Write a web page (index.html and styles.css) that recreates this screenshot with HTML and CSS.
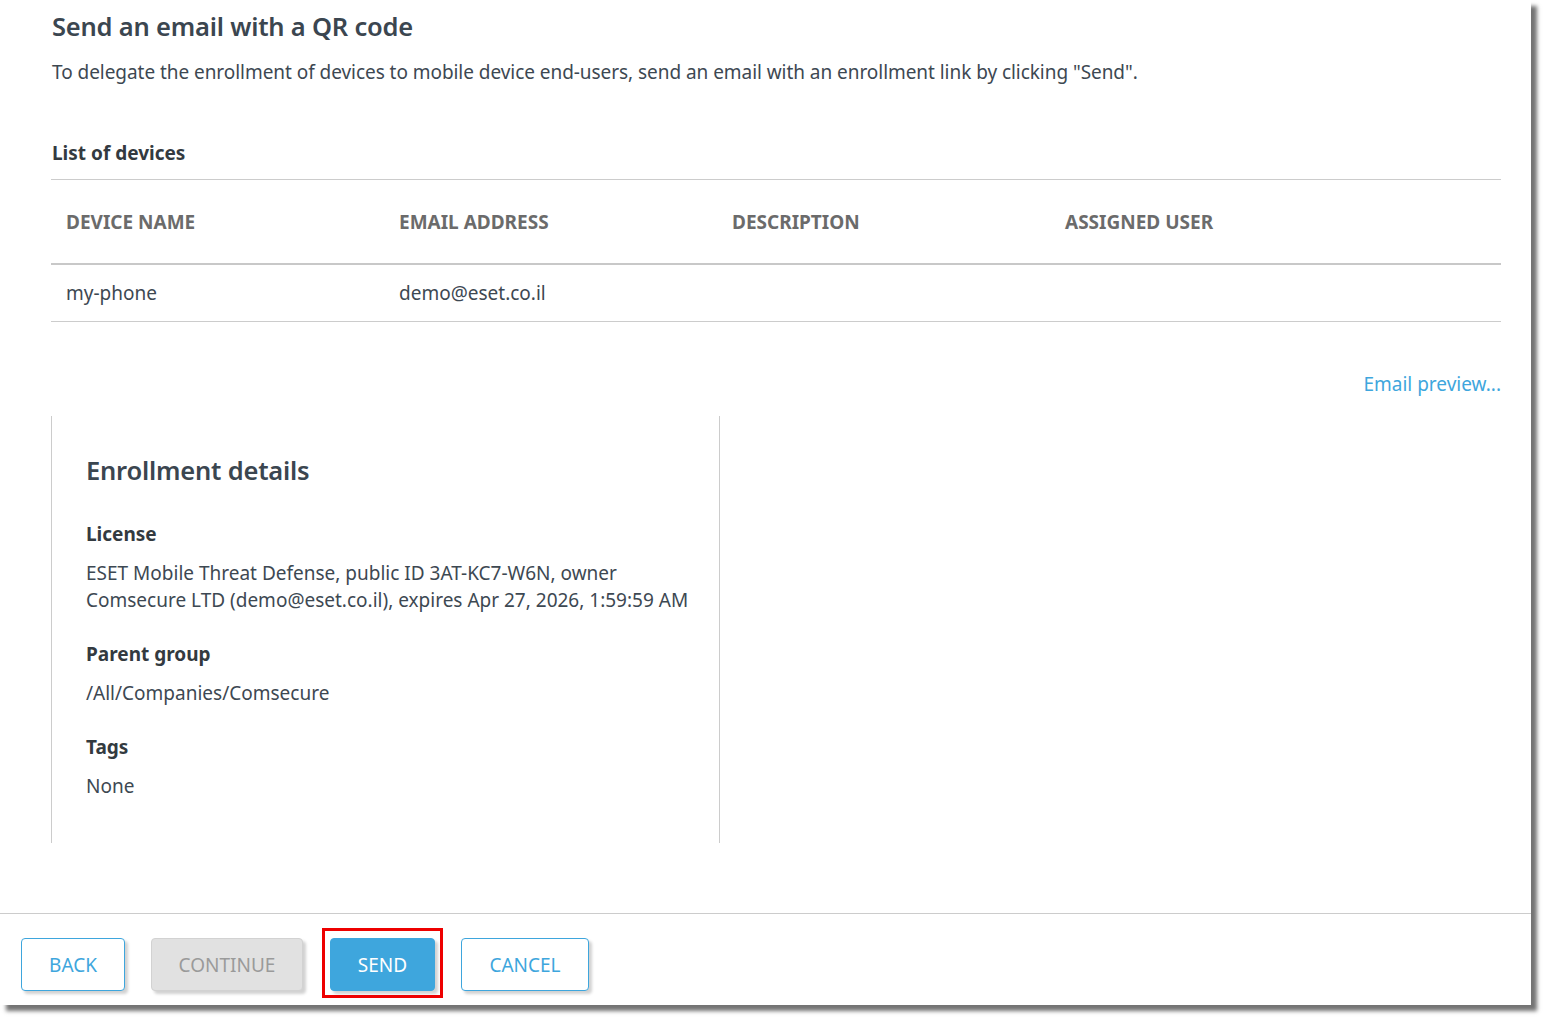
FILE: index.html
```html
<!DOCTYPE html>
<html>
<head>
<meta charset="utf-8">
<link rel="stylesheet" href="styles.css">
</head>
<body>
<div class="panel">
  <div class="content">
    <h1 class="title">Send an email with a QR code</h1>
    <p class="desc">To delegate the enrollment of devices to mobile device end-users, send an email with an enrollment link by clicking "Send".</p>
    <h2 class="list-title">List of devices</h2>
    <div class="table">
      <div class="row head">
        <div class="cell">DEVICE NAME</div>
        <div class="cell">EMAIL ADDRESS</div>
        <div class="cell">DESCRIPTION</div>
        <div class="cell">ASSIGNED USER</div>
      </div>
      <div class="row body">
        <div class="cell">my-phone</div>
        <div class="cell">demo@eset.co.il</div>
        <div class="cell"></div>
        <div class="cell"></div>
      </div>
    </div>
    <div class="preview-row"><a class="link">Email preview...</a></div>
    <div class="details">
      <h3 class="details-title">Enrollment details</h3>
      <div class="label first">License</div>
      <div class="value">ESET Mobile Threat Defense, public ID 3AT-KC7-W6N, owner<br>Comsecure LTD (demo@eset.co.il), expires Apr 27, 2026, 1:59:59 AM</div>
      <div class="label">Parent group</div>
      <div class="value">/All/Companies/Comsecure</div>
      <div class="label">Tags</div>
      <div class="value">None</div>
    </div>
  </div>
  <div class="footer">
    <button class="btn outline back">BACK</button>
    <button class="btn disabled continue">CONTINUE</button>
    <span class="highlight"><button class="btn primary send">SEND</button></span>
    <button class="btn outline cancel">CANCEL</button>
  </div>
</div>
</body>
</html>
```

FILE: styles.css
```css
html, body {
  margin: 0;
  padding: 0;
  background: #ffffff;
}
body {
  font-family: "Noto Sans", "Open Sans", sans-serif;
  color: #3d4852;
  padding-bottom: 15px;
}
.panel {
  width: 1531px;
  height: 1005px;
  background: #ffffff;
  box-shadow: 6px 6px 4px rgba(0, 0, 0, 0.55);
  display: flex;
  flex-direction: column;
}
.content {
  padding: 8px 30px 0 51px;
  flex: 1;
}
.title {
  margin: 0 0 0 1px;
  font-size: 25.5px;
  line-height: 36px;
  font-weight: 600;
  color: #3b4650;
  letter-spacing: -0.2px;
}
.desc {
  margin: 15px 0 0 1px;
  font-size: 19px;
  line-height: 26px;
  color: #3d4852;
  letter-spacing: -0.05px;
}
.list-title {
  margin: 55px 0 0 1px;
  font-size: 19px;
  line-height: 26px;
  font-weight: 700;
  color: #333a40;
  padding-bottom: 13px;
}
.table {
  border-top: 1px solid #cccccc;
}
.row {
  display: grid;
  grid-template-columns: 333px 333px 333px 333px;
  align-items: center;
}
.row.head {
  height: 83px;
  border-bottom: 2px solid #c8c8c8;
}
.row.head .cell {
  font-weight: 700;
  font-size: 19px;
  color: #6b6b6b;
}
.row.body {
  height: 56px;
  border-bottom: 1px solid #cccccc;
}
.cell {
  padding-left: 15px;
  font-size: 19px;
  line-height: 26px;
  color: #3d4852;
}
.preview-row {
  margin-top: 49px;
  display: flex;
  justify-content: flex-end;
}
.link {
  font-size: 19px;
  line-height: 26px;
  color: #3ea6dd;
}
.details {
  margin-top: 19px;
  width: 669px;
  height: 427px;
  box-sizing: border-box;
  border-left: 1px solid #cccccc;
  border-right: 1px solid #cccccc;
  padding: 36px 0 0 34px;
}
.details-title {
  margin: 0;
  font-size: 25.5px;
  line-height: 36px;
  font-weight: 600;
  color: #3b4650;
  letter-spacing: -0.2px;
}
.label {
  margin-top: 27px;
  font-size: 19px;
  line-height: 26px;
  font-weight: 700;
  color: #333a40;
}
.label.first {
  margin-top: 33px;
}
.value {
  margin-top: 13px;
  font-size: 19px;
  line-height: 27px;
  color: #3d4852;
  white-space: nowrap;
}
.footer {
  border-top: 1px solid #cccccc;
  height: 92px;
  flex: 0 0 92px;
  box-sizing: border-box;
  padding: 24px 0 0 21px;
  display: flex;
  align-items: flex-start;
  gap: 26px;
}
.btn {
  height: 53px;
  box-sizing: border-box;
  border-radius: 4px;
  font-family: "Noto Sans", "Open Sans", sans-serif;
  font-size: 19px;
  padding: 0;
  box-shadow: 3px 3px 3px rgba(0, 0, 0, 0.18);
  cursor: pointer;
}
.btn.outline {
  background: #ffffff;
  border: 1px solid #3ea6dd;
  color: #3ea6dd;
}
.btn.disabled {
  background: #e1e1e1;
  border: 1px solid #d2d2d2;
  color: #9a9a9a;
}
.btn.primary {
  background: #3ea6dd;
  border: 1px solid #3ea6dd;
  color: #ffffff;
}
.back { width: 104px; }
.continue { width: 152px; }
.send { width: 105px; }
.cancel { width: 128px; }
.highlight {
  position: relative;
  display: block;
  margin-left: 1px;
}
.highlight::after {
  content: "";
  position: absolute;
  left: -8px;
  top: -10px;
  right: -8px;
  bottom: -7px;
  border: 3px solid #ee0000;
  pointer-events: none;
}
```
